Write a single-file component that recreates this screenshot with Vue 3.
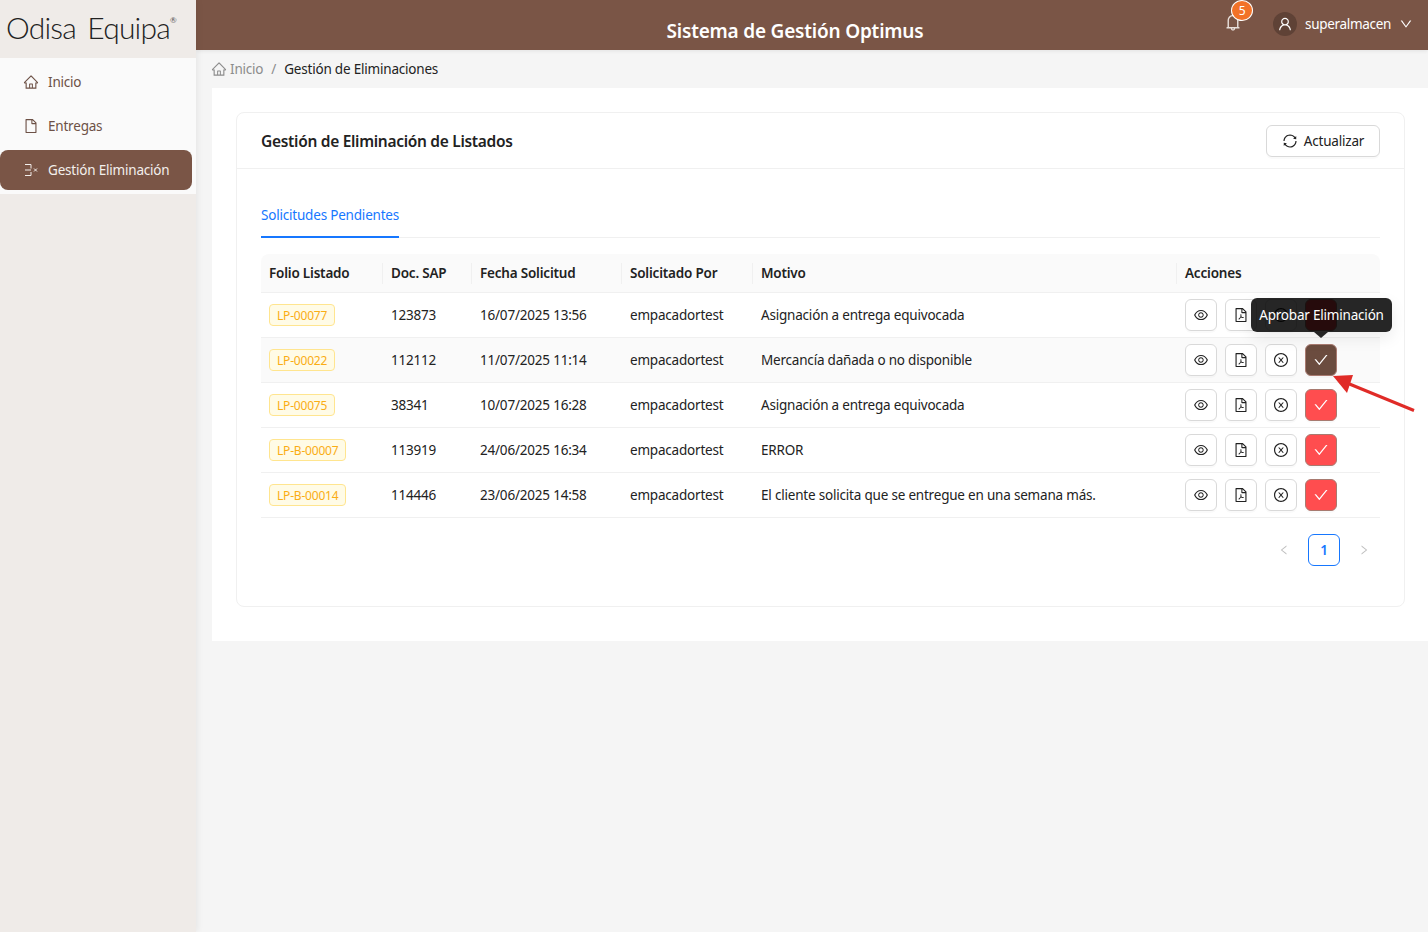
<script setup>
const icons = {
  eye: ['M942.2 486.2C847.4 286.5 704.1 186 512 186c-192.2 0-335.4 100.5-430.2 300.3a60.3 60.3 0 000 51.5C176.6 737.5 319.9 838 512 838c192.2 0 335.4-100.5 430.2-300.3 7.7-16.2 7.7-35 0-51.5zM512 766c-161.3 0-279.4-81.8-362.7-254C232.6 339.8 350.7 258 512 258c161.3 0 279.4 81.8 362.7 254C791.5 684.2 673.4 766 512 766zm-4-430c-97.2 0-176 78.8-176 176s78.8 176 176 176 176-78.8 176-176-78.8-176-176-176zm0 288c-61.9 0-112-50.1-112-112s50.1-112 112-112 112 50.1 112 112-50.1 112-112 112z'],
  pdf: ['M531.3 574.4l.3-1.4c5.8-23.9 13.1-53.7 7.4-80.7-3.8-21.3-19.5-29.6-32.9-30.2-15.8-.7-29.9 8.3-33.4 21.4-6.6 24-.7 56.8 10.1 98.6-13.6 32.4-35.3 79.5-51.2 107.5-29.6 15.3-69.3 38.9-75.2 68.7-1.2 5.5.2 12.5 3.5 18.8 3.7 7 9.6 12.4 16.5 15 3 1.1 6.6 2 10.8 2 17.6 0 46.1-14.2 84.1-79.4 5.8-1.9 11.8-3.9 17.6-5.9 27.2-9.2 55.4-18.8 80.9-23.1 28.2 15.1 60.3 24.8 82.1 24.8 21.6 0 30.1-12.8 33.3-20.5 5.6-13.5 2.9-30.5-6.2-39.6-13.2-13-45.3-16.4-95.3-10.2-24.6-15-40.7-35.4-52.4-65.8zM421.6 726.3c-13.9 20.2-24.4 30.3-30.1 34.7 6.7-12.3 19.8-25.3 30.1-34.7zm87.6-235.5c5.2 8.9 4.5 35.8.5 49.4-4.9-19.9-5.6-48.1-2.7-51.4.8.1 1.5.7 2.2 2zm-1.6 120.5c10.7 18.5 24.2 34.4 39.1 46.2-21.6 4.9-41.3 13-58.9 20.2-4.2 1.7-8.3 3.4-12.3 5 13.3-24.1 24.4-51.4 32.1-71.4zm155.6 65.5c.1.2.2.5-.4.9h-.2l-.2.3c-.8.5-9 5.3-44.3-8.6 40.6-1.9 45 7.3 45.1 7.4zm191.4-388.2L639.4 73.4c-6-6-14.1-9.4-22.6-9.4H192c-17.7 0-32 14.3-32 32v832c0 17.7 14.3 32 32 32h640c17.7 0 32-14.3 32-32V311.3c0-8.5-3.4-16.7-9.4-22.7zM790.2 326H602V137.8L790.2 326zm1.8 562H232V136h302v216a42 42 0 0042 42h216v494z'],
  close: ['M685.4 354.8c0-4.4-3.6-8-8-8l-66 .3L512 465.6l-99.3-118.4-66.1-.3c-4.4 0-8 3.5-8 8 0 1.9.7 3.7 1.9 5.2l130.1 155L340.5 670a8.32 8.32 0 00-1.9 5.2c0 4.4 3.6 8 8 8l66.1-.3L512 564.4l99.3 118.4 66 .3c4.4 0 8-3.5 8-8 0-1.9-.7-3.7-1.9-5.2L553.5 515l130.1-155c1.2-1.4 1.8-3.3 1.8-5.2z', 'M512 65C264.6 65 64 265.6 64 513s200.6 448 448 448 448-200.6 448-448S759.4 65 512 65zm0 820c-205.4 0-372-166.6-372-372s166.6-372 372-372 372 166.6 372 372-166.6 372-372 372z'],
  check: ['M912 190h-69.9c-9.8 0-19.1 4.5-25.1 12.2L404.7 724.5 207 474a32 32 0 00-25.1-12.2H112c-6.7 0-10.4 7.7-6.3 12.9l273.9 347c12.8 16.2 37.4 16.2 50.3 0l488.4-618.9c4.1-5.1.4-12.8-6.3-12.8z'],
  home: ['M946.5 505L560.1 118.8l-25.9-25.9a31.5 31.5 0 00-44.4 0L77.5 505a63.9 63.9 0 00-18.8 46c.4 35.2 29.7 63.3 64.9 63.3h42.5V940h691.8V614.3h43.4c17.1 0 33.2-6.7 45.3-18.8a63.6 63.6 0 0018.7-45.3c0-17-6.7-33.1-18.8-45.2zM568 868H456V664h112v204zm217.9-325.7V868H632V640c0-22.1-17.9-40-40-40H432c-22.1 0-40 17.9-40 40v228H238.1V542.3h-96l370-369.7 23.1 23.1L882 542.3h-96.1z'],
  file: ['M854.6 288.6L639.4 73.4c-6-6-14.1-9.4-22.6-9.4H192c-17.7 0-32 14.3-32 32v832c0 17.7 14.3 32 32 32h640c17.7 0 32-14.3 32-32V311.3c0-8.5-3.4-16.7-9.4-22.7zM790.2 326H602V137.8L790.2 326zm1.8 562H232V136h302v216a42 42 0 0042 42h216v494z'],
  bell: ['M816 768h-24V428c0-141.1-104.3-257.7-240-277.1V112c0-22.1-17.9-40-40-40s-40 17.9-40 40v38.9c-135.7 19.4-240 136-240 277.1v340h-24c-17.7 0-32 14.3-32 32v32c0 4.4 3.6 8 8 8h216c0 61.8 50.2 112 112 112s112-50.2 112-112h216c4.4 0 8-3.6 8-8v-32c0-17.7-14.3-32-32-32zM512 888c-26.5 0-48-21.5-48-48h96c0 26.5-21.5 48-48 48zM304 768V428c0-55.6 21.6-107.8 60.9-147.1S456.4 220 512 220c55.6 0 107.8 21.6 147.1 60.9S720 372.4 720 428v340H304z'],
  user: ['M858.5 763.6a374 374 0 00-80.6-119.5 375.63 375.63 0 00-119.5-80.6c-.4-.2-.8-.3-1.2-.5C719.5 518 760 444.7 760 362c0-137-111-248-248-248S264 225 264 362c0 82.7 40.5 156 102.8 201.1-.4.2-.8.3-1.2.5-44.8 18.9-85 46-119.5 80.6a375.63 375.63 0 00-80.6 119.5A371.7 371.7 0 00136 901.8a8 8 0 008 8.2h60c4.4 0 7.9-3.5 8-7.8 2-77.2 33-149.5 87.8-204.3 56.7-56.7 132-87.9 212.2-87.9s155.5 31.2 212.2 87.9C779 752.7 810 825 812 902.2c.1 4.4 3.6 7.8 8 7.8h60a8 8 0 008-8.2c-1-47.8-10.9-94.3-29.5-138.2zM512 534c-45.9 0-89.1-17.9-121.6-50.4S340 407.9 340 362c0-45.9 17.9-89.1 50.4-121.6S466.1 190 512 190s89.1 17.9 121.6 50.4S684 316.1 684 362c0 45.9-17.9 89.1-50.4 121.6S557.9 534 512 534z'],
  down: ['M884 256h-75c-5.1 0-9.9 2.5-12.9 6.6L512 654.2 227.9 262.6c-3-4.1-7.8-6.6-12.9-6.6h-75c-6.5 0-10.3 7.4-6.5 12.7l352.6 486.1c12.8 17.6 39 17.6 51.7 0l352.6-486.1c3.9-5.3.1-12.7-6.4-12.7z'],
  sync: ['M168 504.2c1-43.7 10-86.1 26.9-126 17.3-41 42.1-77.7 73.7-109.4S337 212.3 378 195c42.4-17.9 87.4-27 133.9-27s91.5 9.1 133.8 27A341.5 341.5 0 01755 268.8c9.9 9.9 19.2 20.4 27.8 31.4l-60.2 47a8 8 0 003 14.1l175.7 43c5 1.2 9.9-2.6 9.9-7.7l.8-180.9c0-6.7-7.7-10.5-12.9-6.3l-56.4 44.1C765.8 155.1 646.2 92 511.8 92 282.7 92 96.3 275.6 92 503.8a8 8 0 008 8.2h60c4.4 0 7.9-3.5 8-7.8zm756 7.8h-60c-4.4 0-7.9 3.5-8 7.8-1 43.7-10 86.1-26.9 126-17.3 41-42.1 77.8-73.7 109.4A342.45 342.45 0 01512.1 856a342.24 342.24 0 01-243.2-100.8c-9.9-9.9-19.2-20.4-27.8-31.4l60.2-47a8 8 0 00-3-14.1l-175.7-43c-5-1.2-9.9 2.6-9.9 7.7l-.7 181c0 6.7 7.7 10.5 12.9 6.3l56.4-44.1C258.2 868.9 377.8 932 512.2 932c229.2 0 415.5-183.7 419.8-411.8a8 8 0 00-8-8.2z'],
  left: ['M724 218.3V141c0-6.7-7.7-10.4-12.9-6.3L260.3 486.8a31.86 31.86 0 000 50.3l450.8 352.1c5.3 4.1 12.9.4 12.9-6.3v-77.3c0-4.9-2.3-9.6-6.1-12.6l-360-281 360-281.1c3.8-3 6.1-7.7 6.1-12.6z'],
  right: ['M765.7 486.8L314.9 134.7A7.97 7.97 0 00302 141v77.3c0 4.9 2.3 9.6 6.1 12.6l360 281.1-360 281.1c-3.9 3-6.1 7.7-6.1 12.6V883c0 6.7 7.7 10.4 12.9 6.3l450.8-352.1a31.96 31.96 0 000-50.4z']
}
const columns = ['Folio Listado', 'Doc. SAP', 'Fecha Solicitud', 'Solicitado Por', 'Motivo', 'Acciones']
const rows = [
  { folio: 'LP-00077', sap: '123873', fecha: '16/07/2025 13:56', por: 'empacadortest', motivo: 'Asignación a entrega equivocada' },
  { folio: 'LP-00022', sap: '112112', fecha: '11/07/2025 11:14', por: 'empacadortest', motivo: 'Mercancía dañada o no disponible', hover: true },
  { folio: 'LP-00075', sap: '38341', fecha: '10/07/2025 16:28', por: 'empacadortest', motivo: 'Asignación a entrega equivocada' },
  { folio: 'LP-B-00007', sap: '113919', fecha: '24/06/2025 16:34', por: 'empacadortest', motivo: 'ERROR' },
  { folio: 'LP-B-00014', sap: '114446', fecha: '23/06/2025 14:58', por: 'empacadortest', motivo: 'El cliente solicita que se entregue en una semana más.' }
]
</script>

<template>
  <div class="layout">
    <aside class="sider">
      <div class="logo">Odisa Equipa<sup>®</sup></div>
      <nav class="menu">
        <a class="item">
          <svg class="ic" viewBox="0 0 1024 1024" fill="currentColor"><path :d="icons.home[0]" /></svg>
          <span>Inicio</span>
        </a>
        <a class="item">
          <svg class="ic" viewBox="0 0 1024 1024" fill="currentColor"><path :d="icons.file[0]" /></svg>
          <span>Entregas</span>
        </a>
        <a class="item active">
          <svg class="ic" viewBox="0 0 16 16" fill="none" stroke="currentColor" stroke-width="1">
            <path d="M2 2.500h6v4M2 8h6M8 10v3.500H2M11 6.500l3 3M14 6.500l-3 3" />
          </svg>
          <span>Gestión Eliminación</span>
        </a>
      </nav>
    </aside>

    <div class="main">
      <header class="topbar">
        <h1 class="title">Sistema de Gestión Optimus</h1>
        <div class="tools">
          <div class="bell">
            <svg viewBox="0 0 1024 1024" fill="currentColor"><path :d="icons.bell[0]" /></svg>
            <span class="badge">5</span>
          </div>
          <div class="avatar">
            <svg viewBox="0 0 1024 1024" fill="currentColor"><path :d="icons.user[0]" /></svg>
          </div>
          <span class="username">superalmacen</span>
          <svg class="chev" viewBox="0 0 1024 1024" fill="currentColor"><path :d="icons.down[0]" /></svg>
        </div>
      </header>

      <div class="crumbs">
        <svg class="crumb-ic" viewBox="0 0 1024 1024" fill="currentColor"><path :d="icons.home[0]" /></svg>
        <span class="crumb-link">Inicio</span>
        <span class="crumb-sep">/</span>
        <span class="crumb-cur">Gestión de Eliminaciones</span>
      </div>

      <main class="content">
        <section class="card">
          <div class="card-head">
            <h2>Gestión de Eliminación de Listados</h2>
            <button class="refresh">
              <svg viewBox="0 0 1024 1024" fill="currentColor"><path :d="icons.sync[0]" /></svg>
              Actualizar
            </button>
          </div>
          <div class="card-body">
            <div class="tabs"><span class="tab">Solicitudes Pendientes</span></div>
            <table class="table">
              <colgroup>
                <col style="width: 122px" /><col style="width: 89px" /><col style="width: 150px" />
                <col style="width: 131px" /><col style="width: 424px" /><col style="width: 203px" />
              </colgroup>
              <thead>
                <tr><th v-for="c in columns" :key="c">{{ c }}</th></tr>
              </thead>
              <tbody>
                <tr v-for="r in rows" :key="r.folio" :class="{ hover: r.hover }">
                  <td><span class="tag">{{ r.folio }}</span></td>
                  <td>{{ r.sap }}</td>
                  <td>{{ r.fecha }}</td>
                  <td>{{ r.por }}</td>
                  <td>{{ r.motivo }}</td>
                  <td>
                    <div class="actions">
                      <button class="act"><svg viewBox="0 0 1024 1024" fill="currentColor"><path :d="icons.eye[0]" /></svg></button>
                      <button class="act"><svg viewBox="0 0 1024 1024" fill="currentColor"><path :d="icons.pdf[0]" /></svg></button>
                      <button class="act"><svg viewBox="0 0 1024 1024" fill="currentColor"><path v-for="p in icons.close" :key="p" :d="p" /></svg></button>
                      <button class="act danger" :class="{ brown: r.hover }"><svg viewBox="0 0 1024 1024" fill="currentColor"><path :d="icons.check[0]" /></svg></button>
                    </div>
                  </td>
                </tr>
              </tbody>
            </table>
            <div class="pager">
              <svg class="pg-arrow" viewBox="0 0 1024 1024" fill="currentColor"><path :d="icons.left[0]" /></svg>
              <span class="pg-num">1</span>
              <svg class="pg-arrow" viewBox="0 0 1024 1024" fill="currentColor"><path :d="icons.right[0]" /></svg>
            </div>
          </div>
        </section>
      </main>
    </div>

    <div class="tooltip">Aprobar Eliminación<i class="tip-arrow"></i></div>
    <svg class="callout" width="90" height="44" viewBox="0 0 90 44">
      <path d="M83 37.500L16 10" stroke="#e02b27" stroke-width="3" fill="none" />
      <path d="M2 3l20-1-6 18z" fill="#e02b27" />
    </svg>
  </div>
</template>

<style>
html, body { margin: 0; background: #f5f5f5; }
</style>

<style scoped>
* { box-sizing: border-box; }
.layout {
  position: relative;
  display: flex;
  min-height: 932px;
  font-family: "Noto Sans", "Open Sans", sans-serif;
  font-size: 13.500px;
  letter-spacing: -0.2px;
  color: #222;
  overflow: hidden;
}
.sider {
  width: 196px;
  flex: none;
  background: #efebe8;
  box-shadow: 2px 0 6px rgba(0, 0, 0, 0.06);
  z-index: 2;
}
.logo {
  height: 58px;
  padding: 7px 0 0 6px;
  font-family: Lato, sans-serif;
  font-weight: 300;
  font-size: 30px;
  line-height: 40px;
  color: #222;
  white-space: nowrap;
  word-spacing: 4px;
  letter-spacing: -0.8px;
}
.logo sup { font-size: 8px; line-height: 0; vertical-align: 16px; font-weight: 400; color: #555; letter-spacing: 0; }
.menu {
  height: 136px;
  background: #fafafa;
  padding-top: 4px;
  display: flex;
  flex-direction: column;
  gap: 4px;
}
.item {
  height: 40px;
  width: 192px;
  border-radius: 8px;
  padding-left: 23px;
  display: flex;
  align-items: center;
  gap: 9px;
  color: #6d5146;
}
.item.active { background: #7a5546; color: #f3efec; }
.ic { width: 16px; height: 16px; flex: none; }
.main { flex: 1; min-width: 0; }
.topbar {
  height: 50px;
  background: #7a5546;
  display: flex;
  padding-left: 169px;
  color: #fff;
  box-shadow: 0 1px 4px rgba(0, 0, 0, 0.08);
}
.title {
  flex: 1;
  margin: 0;
  padding-top: 17px;
  text-align: center;
  font-size: 19px;
  font-weight: 600;
  line-height: 28px;
}
.tools {
  width: 203px;
  height: 50px;
  display: flex;
  align-items: center;
  padding-bottom: 2px;
}
.bell { position: relative; width: 20px; height: 20px; margin: 0 30px 4px -2px; color: #e8dfda; }
.bell svg { display: block; width: 20px; height: 20px; }
.badge {
  position: absolute;
  left: 8px;
  top: -12px;
  width: 22px;
  height: 21px;
  border-radius: 50%;
  background: #f27228;
  border: 1px solid #fff;
  color: #fff;
  font-size: 12px;
  line-height: 19px;
  text-align: center;
}
.avatar {
  width: 24px;
  height: 24px;
  border-radius: 50%;
  background: #5f4236;
  display: flex;
  align-items: center;
  justify-content: center;
  margin-right: 8px;
}
.avatar svg { width: 16px; height: 16px; }
.username { color: #fff; margin-right: 8px; letter-spacing: -0.3px; }
.chev { width: 14px; height: 14px; }
.crumbs {
  height: 38px;
  padding-left: 15px;
  display: flex;
  align-items: center;
  color: #8c8c8c;
}
.crumb-ic { width: 16px; height: 16px; margin-right: 3px; }
.crumb-sep { margin: 0 8px; }
.crumb-cur { color: #222; }
.content {
  margin-left: 16px;
  height: 553px;
  background: #fff;
  padding: 24px 23px 0 24px;
}
.card {
  height: 495px;
  border: 1px solid #f0f0f0;
  border-radius: 8px;
  background: #fff;
}
.card-head {
  height: 56px;
  padding: 0 24px;
  display: flex;
  align-items: center;
  justify-content: space-between;
  border-bottom: 1px solid #f0f0f0;
}
.card-head h2 { margin: 0; font-size: 15.500px; letter-spacing: -0.3px; font-weight: 600; color: #222; }
.refresh {
  width: 114px;
  height: 32px;
  padding: 0;
  border: 1px solid #d9d9d9;
  border-radius: 6px;
  background: #fff;
  font: inherit;
  letter-spacing: inherit;
  color: #222;
  display: flex;
  align-items: center;
  justify-content: center;
  gap: 6px;
  box-shadow: 0 2px 0 rgba(0, 0, 0, 0.02);
}
.refresh svg { width: 16px; height: 16px; }
.card-body { padding: 24px 24px 0; }
.tabs { height: 45px; border-bottom: 1px solid #f0f0f0; margin-bottom: 16px; }
.tab {
  display: inline-block;
  height: 45px;
  line-height: 44px;
  color: #1677ff;
  border-bottom: 2px solid #1677ff;
  white-space: nowrap;
}
.table {
  width: 1119px;
  table-layout: fixed;
  border-collapse: separate;
  border-spacing: 0;
}
th {
  position: relative;
  height: 39px;
  padding: 0 8px;
  background: #fafafa;
  border-bottom: 1px solid #f0f0f0;
  text-align: left;
  font-weight: 600;
  color: #222;
}
th:first-child { border-top-left-radius: 8px; }
th:last-child { border-top-right-radius: 8px; }
th:not(:last-child)::after {
  content: "";
  position: absolute;
  right: 0;
  top: 9px;
  height: 21px;
  width: 1px;
  background: #f0f0f0;
}
td {
  height: 45px;
  padding: 0 8px;
  border-bottom: 1px solid #f0f0f0;
  color: #222;
  white-space: nowrap;
}
tr.hover td { background: #fafafa; }
.tag {
  display: inline-block;
  height: 22px;
  padding: 0 7px;
  border: 1px solid #ffe58f;
  border-radius: 4px;
  background: #fffbe6;
  color: #faad14;
  font-size: 12px;
  line-height: 21px;
}
.actions { display: flex; gap: 8px; }
.act {
  width: 32px;
  height: 32px;
  padding: 0;
  border: 1px solid #d9d9d9;
  border-radius: 6px;
  background: #fff;
  color: #222;
  display: flex;
  align-items: center;
  justify-content: center;
  box-shadow: 0 2px 0 rgba(0, 0, 0, 0.02);
}
.act svg { width: 16px; height: 16px; }
.danger { background: #ff4d4f; border-color: #a87a70; color: #fff; }
.danger.brown { background: #6b4c3f; }
.pager {
  display: flex;
  justify-content: flex-end;
  align-items: center;
  margin-top: 16px;
  height: 32px;
  padding-right: 10px;
  gap: 18px;
}
.pg-arrow { width: 12px; height: 12px; color: #bfbfbf; }
.pg-num {
  width: 32px;
  height: 32px;
  border: 1px solid #1677ff;
  border-radius: 6px;
  color: #1677ff;
  font-weight: 600;
  text-align: center;
  line-height: 30px;
}
.tooltip {
  position: absolute;
  left: 1251px;
  top: 298px;
  width: 141px;
  height: 34px;
  border-radius: 6px;
  background: rgba(0, 0, 0, 0.85);
  color: #fff;
  text-align: center;
  line-height: 34px;
  white-space: nowrap;
  box-shadow: 0 6px 16px rgba(0, 0, 0, 0.08);
}
.tip-arrow {
  position: absolute;
  left: 63px;
  top: 34px;
  border-left: 7px solid transparent;
  border-right: 7px solid transparent;
  border-top: 6px solid rgba(0, 0, 0, 0.85);
}
.callout { position: absolute; left: 1331px; top: 373px; }
</style>
